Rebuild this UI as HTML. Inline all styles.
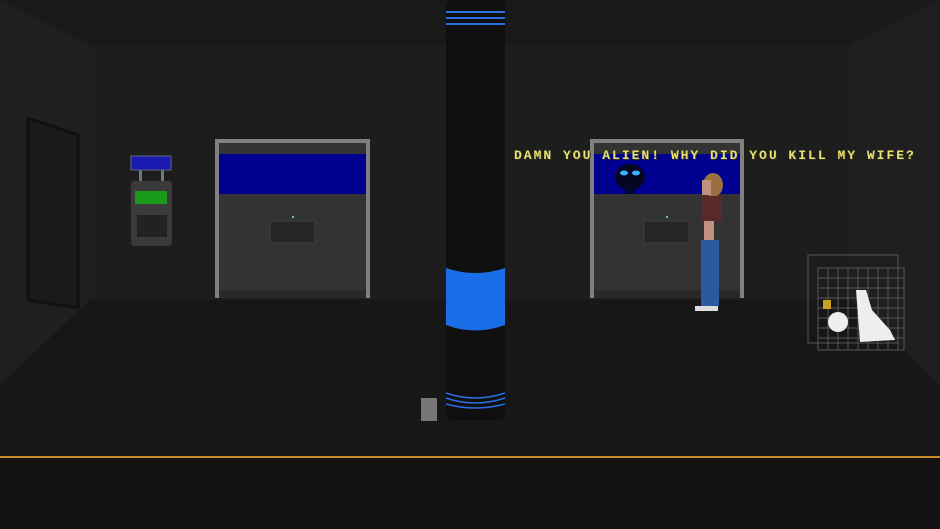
<!DOCTYPE html>
<html><head><style>
*{margin:0;padding:0}
body{width:940px;height:529px;background:#171717;position:relative;overflow:hidden;font-family:"Liberation Mono",monospace}
div,svg{position:absolute}
</style></head><body>
<svg width="940" height="529" style="left:0;top:0">
<rect x="0" y="0" width="940" height="458" fill="#181818"/>
<polygon points="0,0 940,0 850,45 90,45" fill="#191919"/>
<rect x="90" y="45" width="760" height="255" fill="#1d1d1d"/>
<polygon points="0,0 90,45 90,300 0,385" fill="#1f1f1f"/>
<polygon points="940,0 850,45 850,300 940,385" fill="#1f1f1f"/>
<polygon points="28,118 78,135 78,308 28,300" fill="#1a1a1a" stroke="#111" stroke-width="3"/>
<polygon points="0,385 90,300 850,300 940,385 940,458 0,458" fill="#171717"/>
<rect x="0" y="456" width="940" height="2" fill="#c88a2a"/>
<rect x="0" y="458" width="940" height="71" fill="#121212"/>
<!-- machine -->
<rect x="131" y="156" width="40" height="14" fill="#1a1ab0" stroke="#5a6a8a"/>
<rect x="139" y="170" width="3" height="12" fill="#6a7a7a"/><rect x="161" y="170" width="3" height="12" fill="#6a7a7a"/>
<rect x="131" y="181" width="41" height="65" rx="3" fill="#3a3a3a"/>
<rect x="135" y="191" width="32" height="13" fill="#1a9a1a"/>
<rect x="137" y="215" width="30" height="22" fill="#222"/>
<!-- panel1 -->
<rect x="215" y="139" width="155" height="159" fill="#808080"/>
<rect x="219" y="143" width="147" height="155" fill="#333"/>
<rect x="219" y="154" width="147" height="40" fill="#000090"/>
<rect x="219" y="290" width="147" height="8" fill="#2a2a2a"/>
<rect x="270" y="221" width="45" height="22" fill="#262626" stroke="#3e3e3e"/>
<rect x="292" y="216" width="2" height="2" fill="#6c6"/>
<!-- panel2 -->
<rect x="590" y="139" width="154" height="159" fill="#808080"/>
<rect x="594" y="143" width="146" height="155" fill="#333"/>
<rect x="594" y="154" width="146" height="40" fill="#000090"/>
<rect x="594" y="290" width="146" height="8" fill="#2a2a2a"/>
<rect x="644" y="221" width="45" height="22" fill="#262626" stroke="#3e3e3e"/>
<rect x="666" y="216" width="2" height="2" fill="#6c6"/>
<ellipse cx="630" cy="177" rx="15" ry="13" fill="#060620"/>
<rect x="626" y="186" width="8" height="8" fill="#060620"/>
<ellipse cx="624" cy="173" rx="4" ry="2.5" fill="#3ab0ff"/><ellipse cx="636" cy="173" rx="4" ry="2.5" fill="#3ab0ff"/>
<!-- pillar -->
<rect x="446" y="0" width="59" height="420" rx="6" fill="#0f0f0f"/>
<rect x="446" y="11" width="59" height="2" fill="#2a6ee0"/><rect x="446" y="17" width="59" height="2" fill="#2a6ee0"/><rect x="446" y="23" width="59" height="2" fill="#2a6ee0"/>
<path d="M446 268 Q475 278 505 268 L505 325 Q475 336 446 325Z" fill="#1a6ee8"/>
<path d="M446 393 Q475 403 505 393 M446 398 Q475 408 505 398 M446 404 Q475 412 505 404" stroke="#2a6ee0" stroke-width="1.5" fill="none"/>
<rect x="421" y="398" width="16" height="23" fill="#777"/>
<!-- man -->
<ellipse cx="713" cy="185" rx="10" ry="12" fill="#9a7040"/>
<rect x="702" y="180" width="9" height="15" fill="#c09080"/>
<rect x="702" y="196" width="20" height="25" fill="#5a2a2a"/>
<rect x="704" y="221" width="10" height="30" fill="#c09080"/>
<rect x="701" y="240" width="18" height="66" fill="#2a5aa0"/>
<rect x="695" y="306" width="23" height="5" fill="#ddd"/>
<!-- cage -->
<g stroke="#555" fill="none" stroke-width="1">
<rect x="808" y="255" width="90" height="88"/><rect x="818" y="268" width="86" height="82"/>
<path d="M828 268V350M838 268V350M848 268V350M858 268V350M868 268V350M878 268V350M888 268V350M898 268V350M818 278H904M818 288H904M818 298H904M818 308H904M818 318H904M818 328H904M818 338H904"/>
</g>
<ellipse cx="838" cy="322" rx="10" ry="10" fill="#eee"/>
<path d="M856 290 L866 290 L872 310 L890 330 L895 340 L860 342Z" fill="#eee"/>
<rect x="823" y="300" width="8" height="9" fill="#c9a020"/>
</svg>
<div style="left:514px;top:148px;color:#e8e070;font-size:13px;font-weight:bold;letter-spacing:2px;white-space:nowrap;text-shadow:1px 1px 0 #332">DAMN YOU ALIEN! WHY DID YOU KILL MY WIFE?</div>
</body></html>
